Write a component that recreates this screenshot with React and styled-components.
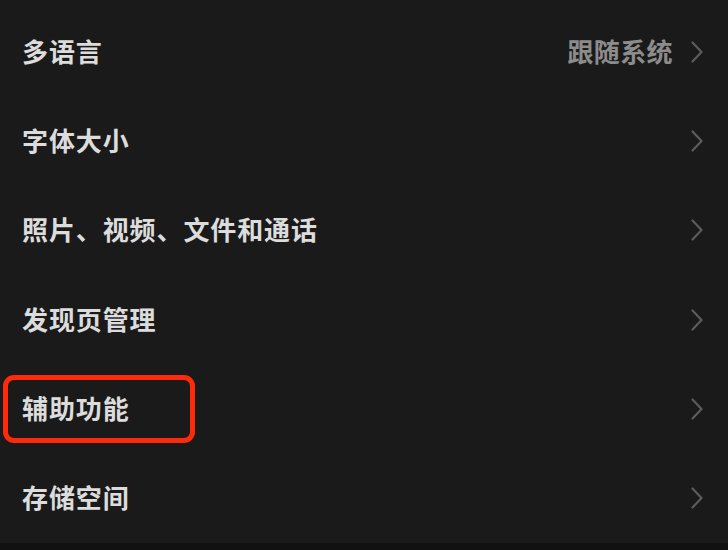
import React from "react";
import styled, { createGlobalStyle } from "styled-components";

const GlobalStyle = createGlobalStyle`
	html, body {
		margin: 0;
		padding: 0;
		background: #111111;
	}
	body {
		font-family: "Noto Sans CJK SC", "Noto Sans", sans-serif;
	}
`;

const Page = styled.div`
	width: 728px;
	height: 550px;
	display: flex;
	flex-direction: column;
	background: #111111;
	overflow: hidden;
`;

const List = styled.div`
	display: flex;
	flex-direction: column;
	padding-top: 7px;
	background: #1a1a1a;
`;

const Row = styled.div`
	position: relative;
	height: 89.3px;
	display: flex;
	align-items: center;
	padding: 0 25px 0 22px;
`;

const Label = styled.div`
	flex: 1;
	font-size: 26px;
	font-weight: 700;
	color: #dcdcdc;
	line-height: 1;
	letter-spacing: 0.9px;
	margin-top: -2px;
`;

const Value = styled.div`
	font-size: 26px;
	font-weight: 700;
	color: #8c8c8c;
	line-height: 1;
	margin-right: 18px;
	letter-spacing: 0.4px;
	margin-top: -2px;
`;

const Highlight = styled.div`
	position: absolute;
	left: 3px;
	top: 11px;
	width: 192px;
	height: 68px;
	box-sizing: border-box;
	border: 5px solid #ff2a0a;
	border-radius: 11px;
	pointer-events: none;
`;

const Chevron = () => (
	<svg width="12" height="22" viewBox="0 0 12 22" fill="none">
		<path d="M1.5 1.5 L10.5 11 L1.5 20.5" stroke="#5c5c5c" strokeWidth="2.2" strokeLinecap="round" strokeLinejoin="round" />
	</svg>
);

const items = [
	{ label: "多语言", value: "跟随系统" },
	{ label: "字体大小" },
	{ label: "照片、视频、文件和通话" },
	{ label: "发现页管理" },
	{ label: "辅助功能", marked: true },
	{ label: "存储空间" },
];

export default function App() {
	return (
		<Page>
			<GlobalStyle />
			<List>
				{items.map((item) => (
					<Row key={item.label}>
						{item.marked && <Highlight />}
						<Label>{item.label}</Label>
						{item.value && <Value>{item.value}</Value>}
						<Chevron />
					</Row>
				))}
			</List>
		</Page>
	);
}
